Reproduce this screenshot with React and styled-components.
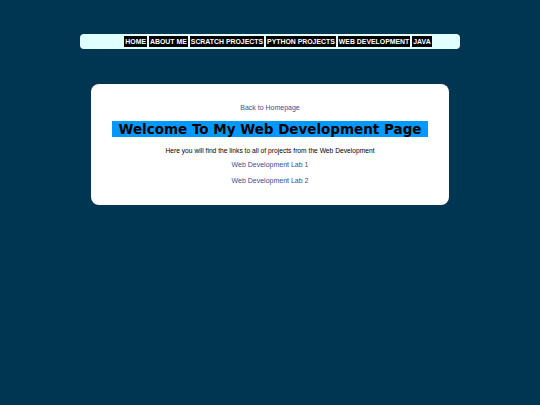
import React from "react";
import styled, { createGlobalStyle } from "styled-components";

const GlobalStyle = createGlobalStyle`
  html, body {
    margin: 0;
    padding: 0;
    background: #003651;
    font-family: "Liberation Sans", Arial, sans-serif;
  }
`;

const Page = styled.div`
  padding-top: 34px;
  min-height: 405px;
  box-sizing: border-box;
`;

const NavBar = styled.nav`
  width: 380px;
  height: 15px;
  margin: 0 auto;
  background: #e0ffff;
  border-radius: 4px;
  display: flex;
  align-items: center;
  justify-content: center;
  padding-left: 16px;
  box-sizing: border-box;
`;

const NavList = styled.ul`
  display: flex;
  gap: 2px;
  list-style: none;
  margin: 0;
  padding: 0;
`;

const NavItem = styled.li`
  background: #000;
  color: #fff;
  font-size: 6.9px;
  font-weight: bold;
  line-height: 11px;
  padding: 0 1px;
`;

const Card = styled.main`
  width: 358px;
  margin: 35px auto 0;
  background: #fff;
  border-radius: 8px;
  padding: 19px 0 20px;
  box-sizing: border-box;
  text-align: center;
  font-size: 7px;
`;

const TextLink = styled.a`
  display: block;
  color: #3d4c96;
  text-decoration: none;
  line-height: 9px;
  margin-top: ${(p) => p.$gap || 0}px;
`;

const Title = styled.h1`
  margin: 9px 21px 0;
  background: #0099ff;
  color: #000;
  font-family: "DejaVu Sans", Verdana, sans-serif;
  font-size: 13.5px;
  font-weight: bold;
  line-height: 16px;
`;

const Intro = styled.p`
  margin: 9px 0 0;
  color: #000;
  font-size: 6.7px;
  line-height: 9px;
`;

const sections = ["HOME", "ABOUT ME", "SCRATCH PROJECTS", "PYTHON PROJECTS", "WEB DEVELOPMENT", "JAVA"];

export default function App() {
  return (
    <Page>
      <GlobalStyle />
      <NavBar>
        <NavList>
          {sections.map((s) => (
            <NavItem key={s}>{s}</NavItem>
          ))}
        </NavList>
      </NavBar>
      <Card>
        <TextLink href="#">Back to Homepage</TextLink>
        <Title>Welcome To My Web Development Page</Title>
        <Intro>Here you will find the links to all of projects from the Web Development</Intro>
        <TextLink href="#" $gap={5}>Web Development Lab 1</TextLink>
        <TextLink href="#" $gap={7}>Web Development Lab 2</TextLink>
      </Card>
    </Page>
  );
}
